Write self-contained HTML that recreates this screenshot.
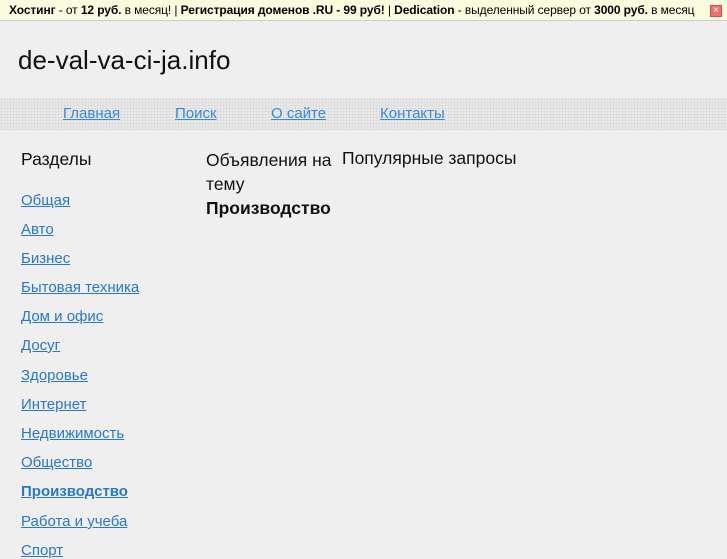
<!DOCTYPE html>
<html><head><meta charset="utf-8"><style>
body{margin:0;background:#efefef;font-family:"Liberation Sans",sans-serif;width:727px;height:545px;overflow:hidden;position:relative}
.top{position:absolute;left:0;top:0;width:727px;height:20px;background:#fbfbe0;border-bottom:1px solid #ccc;font-size:12px;line-height:20px;color:#000;white-space:nowrap}
.top span{position:absolute;left:9px;top:0;letter-spacing:-0.1px}
.x{position:absolute;left:710px;top:5px;width:12px;height:12px;background:#f07070;border:1px solid #d05050;box-sizing:border-box;color:#fff;font-size:10px;line-height:10px;text-align:center}
.title{position:absolute;left:18px;top:45px;font-size:26px;color:#111}
.nav{position:absolute;left:0;top:98px;width:727px;height:32px;background:#e9e9e9;background-image:radial-gradient(#d8d8d8 1px,transparent 1px);background-size:3px 3px}
.nav a{position:absolute;top:7px;font-size:15px;color:#3a88d8}
a{color:#2a78c8;text-decoration:underline}
.h{position:absolute;left:21px;top:149px;font-size:17.5px;color:#111}
.side a{position:absolute;left:21px;font-size:15px}
.c1{position:absolute;left:206px;top:148px;font-size:17.5px;line-height:24px;color:#111;width:136px}
.c2{position:absolute;left:342px;top:148px;font-size:17.5px;color:#111}
</style></head><body>
<div class="top"><span><b>Хостинг</b> - от <b>12 руб.</b> в месяц! | <b>Регистрация доменов .RU - 99 руб!</b> | <b>Dedication</b> - выделенный сервер от <b>3000 руб.</b> в месяц</span><div class="x">×</div></div>
<div class="title">de-val-va-ci-ja.info</div>
<div class="nav"><a style="left:63px">Главная</a><a style="left:175px">Поиск</a><a style="left:271px">О сайте</a><a style="left:380px">Контакты</a></div>
<div class="h">Разделы</div>
<div class="side">
<a style="top:192px">Общая</a>
<a style="top:221px">Авто</a>
<a style="top:250px">Бизнес</a>
<a style="top:279px">Бытовая техника</a>
<a style="top:308px">Дом и офис</a>
<a style="top:337px">Досуг</a>
<a style="top:367px">Здоровье</a>
<a style="top:396px">Интернет</a>
<a style="top:425px">Недвижимость</a>
<a style="top:454px">Общество</a>
<a style="top:483px;font-weight:bold">Производство</a>
<a style="top:513px">Работа и учеба</a>
<a style="top:542px">Спорт</a>
</div>
<div class="c1">Объявления на тему<br><b>Производство</b></div>
<div class="c2">Популярные запросы</div>
</body></html>
